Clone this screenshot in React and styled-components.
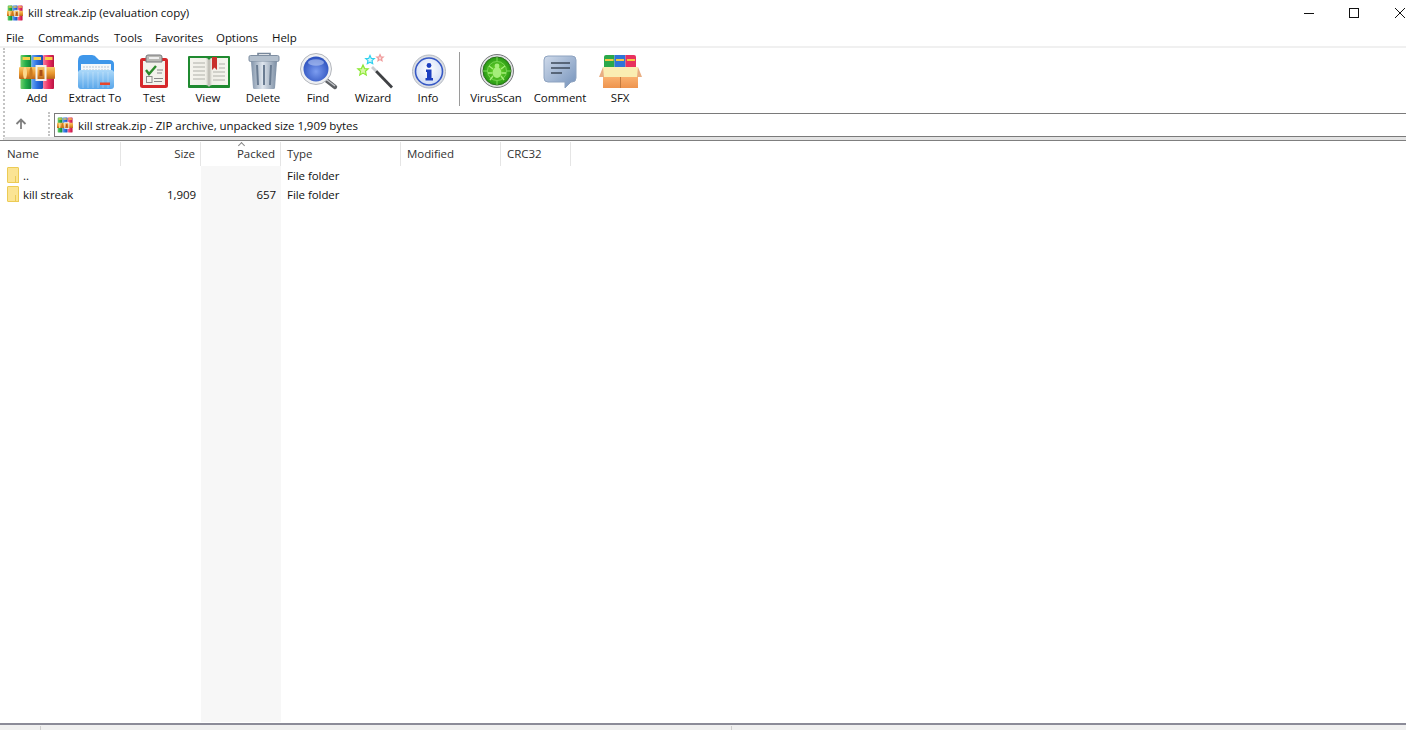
import React from "react";
import styled, { createGlobalStyle } from "styled-components";

const GlobalStyle = createGlobalStyle`
  html, body {
    margin: 0;
    height: 100%;
    overflow: hidden;
    background: #fff;
  }
  body {
    font-family: "Open Sans", "Noto Sans", sans-serif;
    font-size: 11.5px;
    letter-spacing: -0.06px;
    color: #111;
  }
`;

const ArchiveIcon = ({ size }) => (
  <svg width={size} height={size} viewBox="0 0 36 36" style={{ flex: "none" }}>
    <defs>
      <linearGradient id="bookGreen" x1="0" y1="0" x2="1" y2="0">
        <stop offset="0" stopColor="#6fd06a" />
        <stop offset="0.5" stopColor="#23ad4a" />
        <stop offset="1" stopColor="#0f7f38" />
      </linearGradient>
      <linearGradient id="bookBlue" x1="0" y1="0" x2="1" y2="0">
        <stop offset="0" stopColor="#6aa8f2" />
        <stop offset="0.5" stopColor="#2b6fe0" />
        <stop offset="1" stopColor="#1a4bb0" />
      </linearGradient>
      <linearGradient id="bookRed" x1="0" y1="0" x2="1" y2="0">
        <stop offset="0" stopColor="#f77a9c" />
        <stop offset="0.5" stopColor="#ec2f63" />
        <stop offset="1" stopColor="#b91343" />
      </linearGradient>
      <linearGradient id="belt" x1="0" y1="0" x2="0" y2="1">
        <stop offset="0" stopColor="#f8c868" />
        <stop offset="0.55" stopColor="#e8952e" />
        <stop offset="1" stopColor="#b9651a" />
      </linearGradient>
    </defs>
    <rect x="1.5" y="1" width="11" height="34" rx="1" fill="url(#bookGreen)" />
    <rect x="12.5" y="1" width="11.5" height="34" rx="1" fill="url(#bookBlue)" />
    <rect x="24" y="1" width="11" height="34" rx="1" fill="url(#bookRed)" />
    <rect x="3.5" y="3" width="7.5" height="3" fill="#f6d04a" />
    <rect x="14.5" y="3" width="7.5" height="3" fill="#f6d04a" />
    <rect x="26" y="3" width="7.5" height="3" fill="#f6d04a" />
    <rect x="0" y="13" width="36" height="12" rx="1" fill="url(#belt)" />
    <ellipse cx="6" cy="19" rx="2" ry="6" fill="#fbd88c" />
    <ellipse cx="12" cy="19" rx="1.6" ry="6" fill="#c97a20" />
    <rect x="17.5" y="12" width="9" height="14" fill="none" stroke="#f4f1e8" strokeWidth="2" />
    <rect x="20.5" y="16" width="3" height="6" fill="#a84f18" />
  </svg>
);

const ExtractIcon = () => (
  <svg width="48" height="40" viewBox="0 0 48 40">
    <defs>
      <linearGradient id="extractFace" x1="0" y1="0" x2="0" y2="1">
        <stop offset="0" stopColor="#add9f9" />
        <stop offset="1" stopColor="#58a6ea" />
      </linearGradient>
    </defs>
    <path d="M7 9 Q7 3 12 3 H21 Q24 3 26 6 L28 8 H38 Q43 8 43 12 V20 H7 Z" fill="#3f97ea" />
    <rect x="10" y="12" width="30" height="12" fill="#f4f7fa" />
    <path d="M12 15 H38 M12 18 H38" stroke="#b9c6d4" strokeWidth="1" strokeDasharray="2 1" />
    <path d="M7 21 Q7 18 10 18 H40 Q43 18 43 21 V34 Q43 37 40 37 H10 Q7 37 7 34 Z" fill="url(#extractFace)" />
    <path d="M12 20 V36 M17 20 V36 M22 20 V36 M27 20 V36 M32 20 V36 M37 20 V36" stroke="#fff" strokeOpacity="0.14" strokeWidth="2" />
    <rect x="29" y="30.5" width="10" height="2.5" fill="#e8452c" />
  </svg>
);

const TestIcon = () => (
  <svg width="48" height="40" viewBox="0 0 48 40">
    <rect x="10" y="6" width="28" height="30" rx="2.5" fill="#d6282b" />
    <rect x="13" y="9" width="22" height="24" fill="#f3f2ec" />
    <path d="M16 5 Q16 3 18 3 H30 Q32 3 32 5 V10 H16 Z" fill="#b9b9b5" stroke="#77777a" strokeWidth="1" />
    <path d="M19 6 H29" stroke="#eee" strokeWidth="2" />
    <path d="M16 18 L19 22 L26 14" fill="none" stroke="#2c8a2c" strokeWidth="2.4" />
    <path d="M27 18 H33 M27 21 H32" stroke="#8a8a8a" strokeWidth="1.2" />
    <rect x="16.5" y="24.5" width="5.5" height="6" fill="#f5f4ee" stroke="#8c8c8c" />
    <path d="M24 26.5 H33 M24 29.5 H32" stroke="#8a8a8a" strokeWidth="1.2" />
  </svg>
);

const ViewIcon = () => (
  <svg width="48" height="40" viewBox="0 0 48 40">
    <defs>
      <linearGradient id="pageShade" x1="0" y1="0" x2="1" y2="0">
        <stop offset="0" stopColor="#f5f4ee" />
        <stop offset="0.42" stopColor="#f0efe8" />
        <stop offset="0.5" stopColor="#b9b8b0" />
        <stop offset="0.58" stopColor="#f0efe8" />
        <stop offset="1" stopColor="#f5f4ee" />
      </linearGradient>
    </defs>
    <rect x="4" y="4" width="42" height="32" rx="1" fill="#1f8a30" />
    <path d="M6 6 H22 Q24 6 25 8 Q26 6 28 6 H44 V33 H28 Q26 33 25 35 Q24 33 22 33 H6 Z" fill="url(#pageShade)" />
    <path d="M9 11 H21 M9 15 H21 M9 19 H21 M9 23 H21 M9 27 H21 M29 20 H41 M29 24 H41 M29 28 H41 M35 12 H41 M35 16 H41" stroke="#c6c6c0" strokeWidth="1.4" />
    <path d="M28 5 H33 V18 L30.5 15.5 L28 18 Z" fill="#c9302c" />
  </svg>
);

const DeleteIcon = () => (
  <svg width="48" height="40" viewBox="0 0 48 40">
    <defs>
      <linearGradient id="binBody" x1="0" y1="0" x2="1" y2="0">
        <stop offset="0" stopColor="#8193a9" />
        <stop offset="0.45" stopColor="#dfe6ee" />
        <stop offset="1" stopColor="#7b8da3" />
      </linearGradient>
    </defs>
    <path d="M19 4 V1.5 H31 V4" fill="none" stroke="#77879a" strokeWidth="1.6" />
    <rect x="10" y="3.5" width="30" height="6" rx="1.5" fill="#b4c0cd" stroke="#7f8fa2" />
    <path d="M12 9.5 H38 L36 36 Q35.8 37 34.5 37 H15.5 Q14.2 37 14 36 Z" fill="url(#binBody)" />
    <path d="M18 13 L19 33 M25 13 V33 M32 13 L31 33" stroke="#6a7c92" strokeWidth="2" />
  </svg>
);

const FindIcon = () => (
  <svg width="48" height="40" viewBox="0 0 48 40">
    <defs>
      <radialGradient id="lens" cx="0.5" cy="0.6" r="0.65">
        <stop offset="0" stopColor="#7c9df0" />
        <stop offset="1" stopColor="#2348b8" />
      </radialGradient>
    </defs>
    <path d="M32 28 L41 35" stroke="#5d6064" strokeWidth="4.4" strokeLinecap="round" />
    <path d="M33 28 L41 34" stroke="#c2c5c9" strokeWidth="1.4" />
    <circle cx="22" cy="17" r="15.5" fill="#eef0f3" stroke="#b4b7bd" />
    <circle cx="22" cy="17" r="12.5" fill="url(#lens)" />
    <ellipse cx="22" cy="10.5" rx="8" ry="3.2" fill="#c2d4f7" opacity="0.55" />
  </svg>
);

const Star = ({ x, y, r, fill, stroke }) => (
  <path
    transform={`translate(${x} ${y}) scale(${r})`}
    d="M0 -1 L0.29 -0.35 L0.95 -0.31 L0.45 0.14 L0.59 0.81 L0 0.47 L-0.59 0.81 L-0.45 0.14 L-0.95 -0.31 L-0.29 -0.35 Z"
    fill={fill}
    stroke={stroke}
    strokeWidth={1.2 / r}
  />
);

const WizardIcon = () => (
  <svg width="48" height="40" viewBox="0 0 48 40">
    <path d="M27 19 L43 35.5" stroke="#3f4144" strokeWidth="2.8" />
    <path d="M23 15 L27 19" stroke="#c9ccd0" strokeWidth="2.8" />
    <Star x={14} y={18.5} r={5.5} fill="#d8f7a8" stroke="#8be835" />
    <Star x={21} y={8} r={4.5} fill="#d6f7fc" stroke="#2ed0ee" />
    <Star x={31} y={6} r={3.4} fill="#fbdede" stroke="#f09c9c" />
  </svg>
);

const InfoIcon = () => (
  <svg width="48" height="40" viewBox="0 0 48 40">
    <defs>
      <radialGradient id="infoFace" cx="0.5" cy="0.4" r="0.6">
        <stop offset="0" stopColor="#ffffff" />
        <stop offset="1" stopColor="#cfdcf5" />
      </radialGradient>
    </defs>
    <circle cx="25" cy="19.5" r="16.5" fill="#dcdfe4" stroke="#b5bac3" />
    <circle cx="25" cy="19.5" r="13.5" fill="url(#infoFace)" stroke="#3557c4" strokeWidth="1.6" />
    <circle cx="25" cy="13.5" r="2.4" fill="#1c3fc0" />
    <path d="M22 17.5 H27.5 V26 H29 V28.5 H21.5 V26 H23 V20 H22 Z" fill="#1c3fc0" />
  </svg>
);

const VirusIcon = () => (
  <svg width="48" height="40" viewBox="0 0 48 40">
    <defs>
      <radialGradient id="radar" cx="0.5" cy="0.5" r="0.55">
        <stop offset="0" stopColor="#76e02e" />
        <stop offset="1" stopColor="#1f9212" />
      </radialGradient>
    </defs>
    <circle cx="25" cy="19" r="16.5" fill="#dfe0e2" stroke="#77797c" />
    <circle cx="25" cy="19" r="14" fill="url(#radar)" stroke="#2b6e1c" />
    <circle cx="25" cy="19" r="9.5" fill="none" stroke="#8fe66a" strokeOpacity="0.7" />
    <path d="M25 5 V9 M25 29 V33 M11 19 H15 M35 19 H39" stroke="#8fe66a" strokeOpacity="0.8" />
    <ellipse cx="25" cy="20.5" rx="4.4" ry="5.4" fill="#a5ee7a" />
    <circle cx="25" cy="14" r="2.4" fill="#a5ee7a" />
    <path d="M21 17 L17 14 M29 17 L33 14 M20.5 21 H16 M29.5 21 H34 M21 24 L18 28 M29 24 L32 28" stroke="#a5ee7a" strokeWidth="1.4" />
  </svg>
);

const CommentIcon = () => (
  <svg width="48" height="40" viewBox="0 0 48 40">
    <defs>
      <linearGradient id="bubble" x1="0" y1="0" x2="1" y2="1">
        <stop offset="0" stopColor="#cfdaea" />
        <stop offset="1" stopColor="#7492bb" />
      </linearGradient>
    </defs>
    <path d="M12 4 Q8 4 8 8 V26 Q8 30 12 30 H29 V36 L35 30 H36 Q40 30 40 26 V8 Q40 4 36 4 Z" fill="url(#bubble)" stroke="#8ea3c0" />
    <path d="M15 11 H34 M15 16 H34 M15 21 H26" stroke="#3e4a5a" strokeWidth="1.6" />
  </svg>
);

const SfxIcon = () => (
  <svg width="48" height="40" viewBox="0 0 48 40">
    <defs>
      <linearGradient id="sfxBox" x1="0" y1="0" x2="0" y2="1">
        <stop offset="0" stopColor="#f9b06e" />
        <stop offset="1" stopColor="#ee944e" />
      </linearGradient>
    </defs>
    <path d="M8 16 V5 Q8 3 10 3 H18.5 V16 Z" fill="#2aa84a" />
    <rect x="18.5" y="3" width="11" height="13" fill="#2f74d8" />
    <path d="M29.5 3 H38 Q40 3 40 5 V16 H29.5 Z" fill="#e8315f" />
    <path d="M9 8 H17.5 M20 8 H28 M31 8 H39" stroke="#f4c842" strokeWidth="2" />
    <path d="M7 15 H42 V25 H7 Z" fill="#faedb2" />
    <path d="M7 15 L3 25 H8 Z M42 15 L46 25 H41 Z" fill="#e9ae82" />
    <rect x="7" y="25" width="35" height="11" fill="url(#sfxBox)" />
    <path d="M24.5 25 V36" stroke="#c37a3f" />
  </svg>
);

const RarBigIcon = () => (
  <Slot>
    <ArchiveIcon size={36} />
  </Slot>
);

const tools = [
  { label: "Add", w: 46, Icon: RarBigIcon },
  { label: "Extract To", w: 70, Icon: ExtractIcon },
  { label: "Test", w: 48, Icon: TestIcon },
  { label: "View", w: 60, Icon: ViewIcon },
  { label: "Delete", w: 50, Icon: DeleteIcon },
  { label: "Find", w: 60, Icon: FindIcon },
  { label: "Wizard", w: 50, Icon: WizardIcon },
  { label: "Info", w: 60, Icon: InfoIcon },
];

const moreTools = [
  { label: "VirusScan", w: 62, Icon: VirusIcon },
  { label: "Comment", w: 66, Icon: CommentIcon },
  { label: "SFX", w: 54, Icon: SfxIcon },
];

const columns = [
  { label: "Name", w: 121 },
  { label: "Size", w: 80, right: true },
  { label: "Packed", w: 80, right: true, sorted: true },
  { label: "Type", w: 120 },
  { label: "Modified", w: 100 },
  { label: "CRC32", w: 70 },
];

const files = [
  { name: "..", size: "", packed: "", type: "File folder" },
  { name: "kill streak", size: "1,909", packed: "657", type: "File folder" },
];

const ToolList = ({ items }) =>
  items.map(({ label, w, Icon }) => (
    <ToolButton key={label} $w={w}>
      <Icon />
      <ToolLabel>{label}</ToolLabel>
    </ToolButton>
  ));

const App = () => {
  return (
    <Window>
      <GlobalStyle />
      <TitleBar>
        <ArchiveIcon size={16} />
        <TitleText>kill streak.zip (evaluation copy)</TitleText>
        <WindowControls>
          <svg width="10" height="10" viewBox="0 0 10 10">
            <path d="M0 5.5 H10" stroke="#111" />
          </svg>
          <svg width="10" height="10" viewBox="0 0 10 10">
            <rect x="0.5" y="0.5" width="9" height="9" fill="none" stroke="#111" />
          </svg>
          <svg width="10" height="10" viewBox="0 0 10 10">
            <path d="M0 0 L10 10 M10 0 L0 10" stroke="#111" />
          </svg>
        </WindowControls>
      </TitleBar>
      <MenuBar>
        <MenuItem $w={32}>File</MenuItem>
        <MenuItem $w={76}>Commands</MenuItem>
        <MenuItem $w={41}>Tools</MenuItem>
        <MenuItem $w={61}>Favorites</MenuItem>
        <MenuItem $w={56}>Options</MenuItem>
        <MenuItem $w={40}>Help</MenuItem>
      </MenuBar>
      <Bands>
        <Toolbar>
          <ToolList items={tools} />
          <ToolSeparator />
          <ToolList items={moreTools} />
        </Toolbar>
        <AddressRow>
          <UpButton>
            <svg width="12" height="12" viewBox="0 0 12 12">
              <path d="M6 11 V2 M1.5 6 L6 1.5 L10.5 6" fill="none" stroke="#7f7f7f" strokeWidth="1.8" />
            </svg>
          </UpButton>
          <AddressGrip />
          <AddressBox>
            <ArchiveIcon size={16} />
            <span>kill streak.zip - ZIP archive, unpacked size 1,909 bytes</span>
          </AddressBox>
        </AddressRow>
      </Bands>
      <ListHeader>
        {columns.map((col) => (
          <HeaderCell key={col.label} $w={col.w} $right={col.right}>
            {col.sorted && <SortCaret />}
            {col.label}
          </HeaderCell>
        ))}
      </ListHeader>
      <ListBody>
        {files.map((file) => (
          <FileRow key={file.name}>
            <NameCell>
              <FolderIcon />
              <RowText>{file.name}</RowText>
            </NameCell>
            <NumberCell>{file.size}</NumberCell>
            <NumberCell>{file.packed}</NumberCell>
            <TypeCell>{file.type}</TypeCell>
          </FileRow>
        ))}
      </ListBody>
      <StatusBar>
        <StatusPane $w={41} />
        <StatusPane $w={691} />
      </StatusBar>
    </Window>
  );
};

const Window = styled.div`
  display: flex;
  flex-direction: column;
  width: 1406px;
  height: 730px;
  overflow: hidden;
`;

const TitleBar = styled.div`
  display: flex;
  align-items: center;
  gap: 5px;
  height: 30px;
  padding: 0 1px 5px 7px;
  box-sizing: border-box;
  flex: none;
`;

const TitleText = styled.span`
  line-height: 16px;
`;

const WindowControls = styled.div`
  display: flex;
  align-items: center;
  gap: 35px;
  margin-left: auto;
  & > svg:last-child {
    margin-left: 1px;
  }
`;

const MenuBar = styled.div`
  display: flex;
  height: 16px;
  padding-left: 6px;
  line-height: 15px;
  flex: none;
  border-bottom: 2px solid #f0f0f0;
`;

const MenuItem = styled.span`
  width: ${(p) => p.$w}px;
`;

const Bands = styled.div`
  margin-left: 3px;
  border-left: 2px dotted #c4c4c4;
  border-bottom: 3px solid #e3e3e3;
  flex: none;
`;

const Toolbar = styled.div`
  display: flex;
  height: 60px;
  padding-left: 9px;
  box-sizing: border-box;
`;

const ToolButton = styled.div`
  display: flex;
  flex-direction: column;
  align-items: center;
  flex: none;
  width: ${(p) => p.$w}px;
  padding-top: 4px;
`;

const Slot = styled.div`
  display: flex;
  justify-content: center;
  height: 40px;
  padding-top: 2px;
  box-sizing: border-box;
`;

const ToolLabel = styled.span`
  line-height: 12px;
  white-space: nowrap;
`;

const ToolSeparator = styled.div`
  width: 1px;
  height: 54px;
  margin: 4px 5px 0 1px;
  background: #9a9a9a;
  flex: none;
`;

const AddressRow = styled.div`
  display: flex;
  align-items: flex-start;
  height: 29px;
  box-sizing: border-box;
`;

const UpButton = styled.div`
  display: flex;
  justify-content: center;
  width: 31px;
  padding-top: 10px;
  flex: none;
`;

const AddressGrip = styled.div`
  width: 2px;
  height: 24px;
  margin: 4px 2px 0 12px;
  border-left: 2px dotted #c4c4c4;
  flex: none;
`;

const AddressBox = styled.div`
  display: flex;
  align-items: center;
  gap: 5px;
  flex: 1;
  height: 24px;
  margin-top: 5px;
  padding-left: 2px;
  box-sizing: border-box;
  border: 1px solid #7a7a7a;
  border-right: none;
  white-space: nowrap;
`;

const ListHeader = styled.div`
  display: flex;
  height: 26px;
  border-top: 1px solid #7f7f7f;
  box-sizing: border-box;
  padding-top: 1px;
  flex: none;
`;

const HeaderCell = styled.div`
  position: relative;
  width: ${(p) => p.$w}px;
  height: 24px;
  line-height: 24px;
  box-sizing: border-box;
  padding: 0 5px 0 6px;
  text-align: ${(p) => (p.$right ? "right" : "left")};
  border-right: 1px solid #e5e5e5;
  color: #333;
  &:first-child {
    padding-left: 7px;
  }
`;

const SortCaret = styled.span`
  position: absolute;
  top: 1px;
  left: 38px;
  width: 4px;
  height: 4px;
  border-top: 1px solid #888;
  border-left: 1px solid #888;
  transform: rotate(45deg);
`;

const ListBody = styled.div`
  flex: 1;
  background: linear-gradient(#f7f7f7, #f7f7f7) 201px 0 / 80px calc(100% - 1px) no-repeat;
`;

const FileRow = styled.div`
  display: grid;
  grid-template-columns: 121px 80px 80px 120px;
  height: 19px;
  line-height: 18px;
`;

const NameCell = styled.div`
  display: flex;
  align-items: flex-start;
  gap: 4px;
  padding: 1px 0 0 7px;
`;

const RowText = styled.span`
  line-height: 18px;
`;

const NumberCell = styled.div`
  text-align: right;
  padding: 1px 5px 0 0;
`;

const TypeCell = styled.div`
  padding: 1px 0 0 6px;
`;

const FolderShape = styled.span`
  position: relative;
  width: 12px;
  height: 16px;
  box-sizing: border-box;
  background: #fbe493;
  border: 1px solid #eccb55;
  border-radius: 1px;
  flex: none;
  &::after {
    content: "";
    position: absolute;
    right: -1px;
    bottom: -1px;
    width: 2px;
    height: 6px;
    border-left: 1px solid #eccb55;
    border-right: 1px solid #eccb55;
    border-bottom: 1px solid #eccb55;
  }
`;

const FolderIcon = () => <FolderShape />;

const StatusBar = styled.div`
  display: flex;
  height: 7px;
  border-top: 2px solid #8b8b98;
  box-sizing: border-box;
  background: #f0f0f0;
  flex: none;
  padding-top: 1px;
`;

const StatusPane = styled.div`
  width: ${(p) => p.$w}px;
  box-sizing: border-box;
  border-right: 1px solid #cfcfcf;
`;

export default App;
